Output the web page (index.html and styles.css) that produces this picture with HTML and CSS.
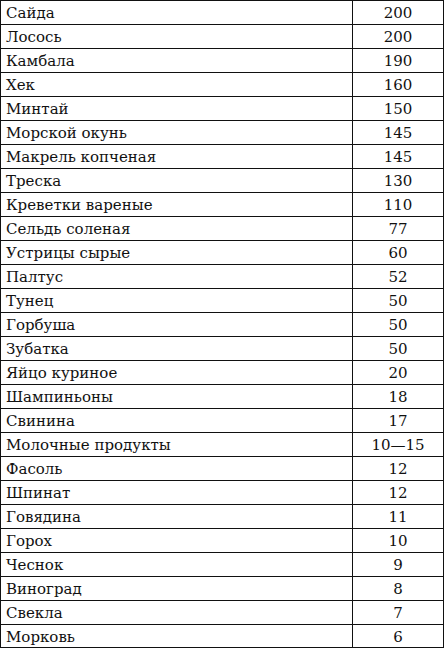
FILE: index.html
```html
<!DOCTYPE html>
<html lang="ru">
<head>
<meta charset="utf-8">
<link rel="stylesheet" href="styles.css">
</head>
<body>
<table class="tbl">
<tbody>
<tr><td class="name">Сайда</td><td class="val">200</td></tr>
<tr><td class="name">Лосось</td><td class="val">200</td></tr>
<tr><td class="name">Камбала</td><td class="val">190</td></tr>
<tr><td class="name">Хек</td><td class="val">160</td></tr>
<tr><td class="name">Минтай</td><td class="val">150</td></tr>
<tr><td class="name">Морской окунь</td><td class="val">145</td></tr>
<tr><td class="name">Макрель копченая</td><td class="val">145</td></tr>
<tr><td class="name">Треска</td><td class="val">130</td></tr>
<tr><td class="name">Креветки вареные</td><td class="val">110</td></tr>
<tr><td class="name">Сельдь соленая</td><td class="val">77</td></tr>
<tr><td class="name">Устрицы сырые</td><td class="val">60</td></tr>
<tr><td class="name">Палтус</td><td class="val">52</td></tr>
<tr><td class="name">Тунец</td><td class="val">50</td></tr>
<tr><td class="name">Горбуша</td><td class="val">50</td></tr>
<tr><td class="name">Зубатка</td><td class="val">50</td></tr>
<tr><td class="name">Яйцо куриное</td><td class="val">20</td></tr>
<tr><td class="name">Шампиньоны</td><td class="val">18</td></tr>
<tr><td class="name">Свинина</td><td class="val">17</td></tr>
<tr><td class="name">Молочные продукты</td><td class="val">10—15</td></tr>
<tr><td class="name">Фасоль</td><td class="val">12</td></tr>
<tr><td class="name">Шпинат</td><td class="val">12</td></tr>
<tr><td class="name">Говядина</td><td class="val">11</td></tr>
<tr><td class="name">Горох</td><td class="val">10</td></tr>
<tr><td class="name">Чеснок</td><td class="val">9</td></tr>
<tr><td class="name">Виноград</td><td class="val">8</td></tr>
<tr><td class="name">Свекла</td><td class="val">7</td></tr>
<tr class="last"><td class="name">Морковь</td><td class="val">6</td></tr>
</tbody>
</table>
</body>
</html>
```
FILE: styles.css
```css
html, body {
  margin: 0;
  padding: 0;
  background: #ffffff;
}
.tbl {
  border-collapse: collapse;
  width: 444px;
  font-family: "DejaVu Serif", "Liberation Serif", serif;
  font-size: 15px;
  color: #111;
  table-layout: fixed;
}
.tbl td {
  border: 1px solid #111;
  height: 23px;
  padding: 2px 0 0 0;
  line-height: 21px;
  box-sizing: border-box;
}
.tbl tr {
  height: 24px;
}
.tbl .name {
  width: 352px;
  padding-left: 5px;
  text-align: left;
}
.tbl .val {
  text-align: center;
}
.tbl tr.last {
  height: 22px;
}
.tbl tr.last td {
  height: 22px;
  line-height: 20px;
}
```
